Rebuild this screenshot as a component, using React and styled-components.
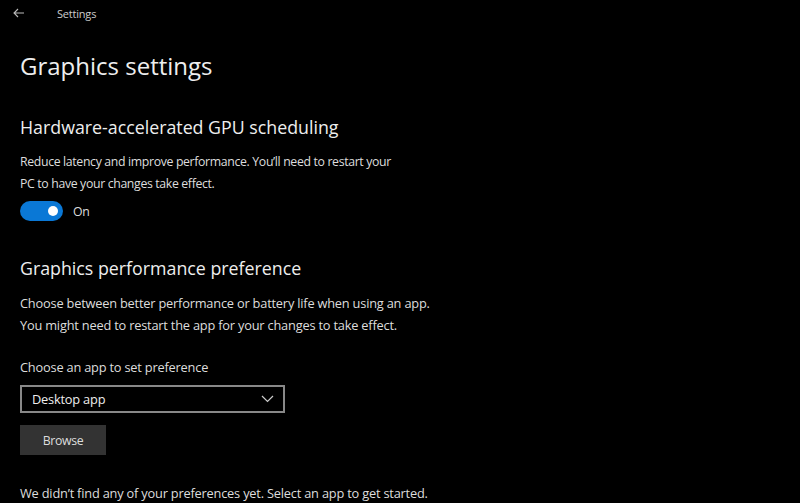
import styled, { createGlobalStyle } from 'styled-components';

const Global = createGlobalStyle`
  html, body {
    margin: 0;
    background: #000;
  }
  body {
    font-family: "Open Sans", "Noto Sans", sans-serif;
    color: #fff;
  }
`;

const Page = () => (
  <>
    <Global />
    <Ventana>
      <BarraTitulo>
        <svg width="12" height="10" viewBox="0 0 12 10">
          <path d="M11 5H1.5M5 1L1 5l4 4" fill="none" stroke="#bbb" strokeWidth="1.1" />
        </svg>
        <TituloVentana>Settings</TituloVentana>
      </BarraTitulo>

      <Contenido>
        <Titulo>Graphics settings</Titulo>

        <Seccion>
          <Subtitulo>Hardware-accelerated GPU scheduling</Subtitulo>
          <Texto>
            Reduce latency and improve performance. You’ll need to restart your
            <br />
            PC to have your changes take effect.
          </Texto>
          <FilaToggle>
            <Toggle>
              <Perilla />
            </Toggle>
            <Etiqueta>On</Etiqueta>
          </FilaToggle>
        </Seccion>

        <Seccion $top={34}>
          <Subtitulo>Graphics performance preference</Subtitulo>
          <Texto $ancho>
            Choose between better performance or battery life when using an app.
            <br />
            You might need to restart the app for your changes to take effect.
          </Texto>
          <Etiqueta $top={22} $ancho>Choose an app to set preference</Etiqueta>
          <Desplegable>
            <span>Desktop app</span>
            <svg width="13" height="8" viewBox="0 0 13 8">
              <path d="M1 1l5.5 5.5L12 1" fill="none" stroke="#ccc" strokeWidth="1.2" />
            </svg>
          </Desplegable>
          <Boton>Browse</Boton>
          <Texto $top={27} $ancho>
            We didn’t find any of your preferences yet. Select an app to get started.
          </Texto>
        </Seccion>
      </Contenido>
    </Ventana>
  </>
);

export default Page;

const Ventana = styled.div`
  width: 800px;
  height: 503px;
  overflow: hidden;
  background: #000;
`;

const BarraTitulo = styled.div`
  display: flex;
  align-items: center;
  height: 26px;
  padding-left: 13px;
  gap: 32px;
`;

const TituloVentana = styled.span`
  font-size: 11px;
  color: #ccc;
  letter-spacing: -0.2px;
`;

const Contenido = styled.div`
  padding: 20px 20px 0 20px;
`;

const Titulo = styled.h1`
  margin: 0;
  font-size: 24px;
  font-weight: 400;
  color: #eee;
  line-height: 40px;
`;

const Seccion = styled.div`
  margin-top: ${(p) => p.$top || 28}px;
`;

const Subtitulo = styled.h2`
  margin: 0;
  font-size: 17.8px;
  font-weight: 400;
  color: #eee;
  line-height: 26px;
`;

const Texto = styled.p`
  margin: ${(p) => p.$top || 11}px 0 0 0;
  font-size: ${(p) => (p.$ancho ? 12.8 : 12.3)}px;
  line-height: 22px;
  color: #ddd;
  letter-spacing: ${(p) => (p.$ancho ? -0.2 : -0.35)}px;
`;

const FilaToggle = styled.div`
  display: flex;
  align-items: center;
  gap: 10px;
  margin-top: 6px;
`;

const Toggle = styled.div`
  width: 43px;
  height: 20px;
  border-radius: 10px;
  background: #0a78d6;
  display: flex;
  align-items: center;
  justify-content: flex-end;
  padding-right: 5px;
  box-sizing: border-box;
`;

const Perilla = styled.div`
  width: 10px;
  height: 10px;
  border-radius: 50%;
  background: #fff;
`;

const Etiqueta = styled.div`
  margin-top: ${(p) => p.$top || 0}px;
  font-size: ${(p) => (p.$ancho ? 12.8 : 12.3)}px;
  color: #ddd;
  letter-spacing: ${(p) => (p.$ancho ? -0.2 : -0.35)}px;
`;

const Desplegable = styled.div`
  margin-top: 9px;
  width: 265px;
  height: 28px;
  box-sizing: border-box;
  border: 2px solid #888;
  display: flex;
  align-items: center;
  justify-content: space-between;
  padding: 0 9px 0 10px;
  font-size: 12.8px;
  color: #eee;
  letter-spacing: -0.2px;
`;

const Boton = styled.button`
  margin-top: 12px;
  width: 86px;
  height: 30px;
  border: none;
  background: #333;
  color: #ddd;
  font-family: inherit;
  font-size: 12.3px;
  letter-spacing: -0.35px;
  padding: 0;
`;
